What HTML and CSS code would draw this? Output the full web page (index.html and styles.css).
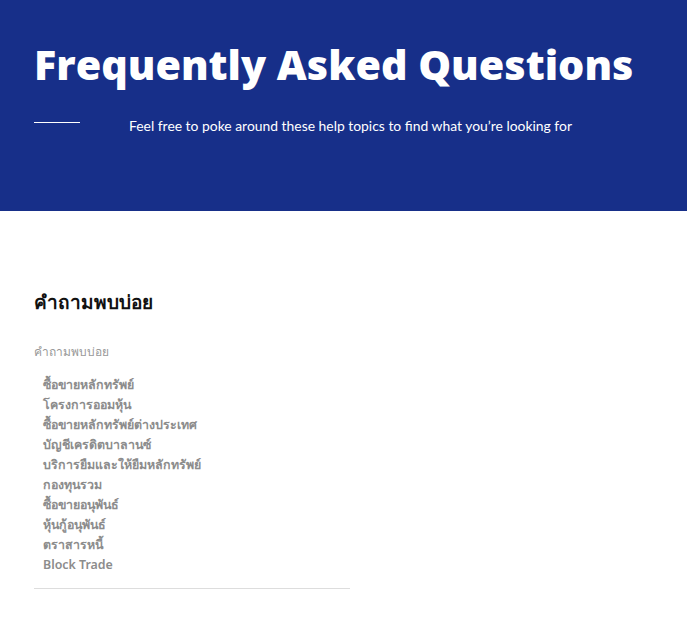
FILE: index.html
```html
<!DOCTYPE html>
<html lang="th">
<head>
  <meta charset="UTF-8" />
  <meta name="viewport" content="width=device-width, initial-scale=1.0" />
  <title>Frequently Asked Questions</title>
  <link rel="stylesheet" href="styles.css">
</head>
<body>

  <div class="hero">
    <h1>Frequently Asked Questions</h1>
    <div class="hero-sub">
      <span class="hero-line"></span>
      <p>Feel free to poke around these help topics to find what you’re looking for</p>
    </div>
  </div>

  <div class="faq">
    <h2>คำถามพบบ่อย</h2>
    <p class="faq-group">คำถามพบบ่อย</p>
    <ul class="faq-list">
      <li><a href="#">ซื้อขายหลักทรัพย์</a></li>
      <li><a href="#">โครงการออมหุ้น</a></li>
      <li><a href="#">ซื้อขายหลักทรัพย์ต่างประเทศ</a></li>
      <li><a href="#">บัญชีเครดิตบาลานซ์</a></li>
      <li><a href="#">บริการยืมและให้ยืมหลักทรัพย์</a></li>
      <li><a href="#">กองทุนรวม</a></li>
      <li><a href="#">ซื้อขายอนุพันธ์</a></li>
      <li><a href="#">หุ้นกู้อนุพันธ์</a></li>
      <li><a href="#">ตราสารหนี้</a></li>
      <li><a href="#">Block Trade</a></li>
    </ul>
  </div>

</body>
</html>
```

FILE: styles.css
```css
body {
  margin: 0;
  font-family: "Noto Sans", "Noto Sans CJK SC", sans-serif;
  background: #fff;
}
.hero {
  background: #172f89;
  color: #fff;
  height: 211px;
  padding: 0 34px;
  box-sizing: border-box;
  overflow: hidden;
}
.hero h1 {
  font-family: "Open Sans", sans-serif;
  font-weight: 800;
  font-size: 41.3px;
  margin: 0;
  padding-top: 35px;
  line-height: 58px;
}
.hero-sub {
  display: flex;
  align-items: center;
  margin-top: 24px;
}
.hero-line {
  display: block;
  width: 46px;
  height: 1px;
  background: #fff;
  margin-right: 49px;
  margin-top: -6px;
}
.hero-sub p {
  margin: 0;
  font-family: Lato, sans-serif;
  font-size: 13.9px;
}
.faq {
  padding: 79px 34px 0;
  width: 316px;
}
.faq h2 {
  font-size: 19px;
  font-weight: 700;
  color: #111;
  margin: 0 0 29px;
  line-height: 24px;
}
.faq-group {
  margin: 0 0 14px;
  font-size: 12px;
  color: #999;
  line-height: 18px;
}
.faq-list {
  list-style: none;
  margin: 0;
  padding: 0 0 13px 9px;
  border-bottom: 1px solid #ddd;
}
.faq-list li {
  line-height: 20px;
  font-size: 12.4px;
}
.faq-list a {
  color: #8c8c8c;
  font-weight: 600;
  text-decoration: none;
}
```
